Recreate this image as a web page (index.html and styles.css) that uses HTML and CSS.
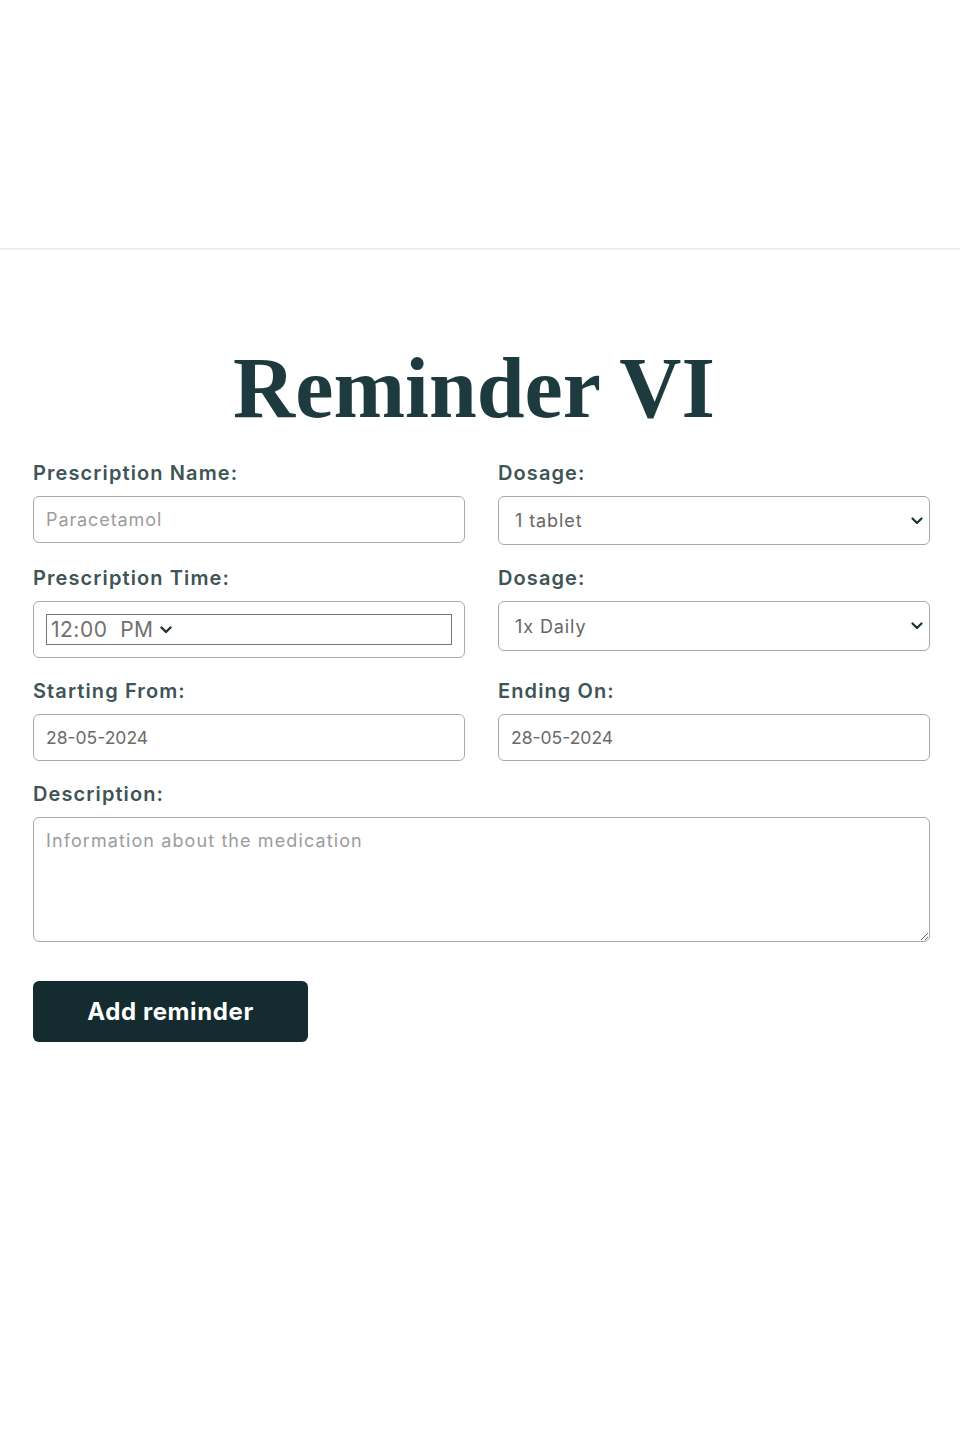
FILE: index.html
```html
<!DOCTYPE html>
<html lang="en">
<head>
<meta charset="utf-8">
<title>Reminder VI</title>
<link rel="stylesheet" href="styles.css">
</head>
<body>
<header class="topbar"></header>
<main class="page">
  <h1 class="title">Reminder VI</h1>
  <form class="form">
    <div class="field">
      <label class="label" for="name">Prescription Name:</label>
      <input class="control" id="name" type="text" placeholder="Paracetamol">
    </div>
    <div class="field">
      <label class="label" for="dose">Dosage:</label>
      <select class="control select" id="dose"><option>1 tablet</option><option>2 tablets</option></select>
    </div>
    <div class="field">
      <label class="label">Prescription Time:</label>
      <div class="time-wrap">
        <div class="time-box">
          <span class="time-text">12:00&nbsp;&nbsp;PM</span>
          <svg class="chev" width="12" height="8" viewBox="0 0 12 8"><path d="M1.5 1.5 L6 6 L10.5 1.5" fill="none" stroke="#1f3336" stroke-width="2.4" stroke-linecap="round" stroke-linejoin="round"/></svg>
        </div>
      </div>
    </div>
    <div class="field">
      <label class="label" for="freq">Dosage:</label>
      <select class="control select tall" id="freq"><option>1x Daily</option><option>2x Daily</option></select>
    </div>
    <div class="field">
      <label class="label" for="start">Starting From:</label>
      <input class="control date" id="start" type="text" value="28-05-2024">
    </div>
    <div class="field">
      <label class="label" for="end">Ending On:</label>
      <input class="control date" id="end" type="text" value="28-05-2024">
    </div>
    <div class="field wide">
      <label class="label" for="desc">Description:</label>
      <textarea class="control area" id="desc" placeholder="Information about the medication"></textarea>
    </div>
    <div class="field wide">
      <button class="btn" type="button">Add reminder</button>
    </div>
  </form>
</main>
</body>
</html>
```
FILE: styles.css
```css
html, body {
  margin: 0;
  padding: 0;
  background: #fff;
}
body {
  font-family: "Inter", "Open Sans", sans-serif;
  color: #3c5254;
}
.topbar {
  height: 248px;
  border-bottom: 1px solid #ececec;
  box-shadow: 0 1px 1px #f4f4f4;
}
.page {
  padding: 89px 30px 0 33px;
}
.title {
  margin: 0 0 24px 0;
  text-align: center;
  font-family: "Liberation Serif", serif;
  font-weight: 700;
  font-size: 86px;
  line-height: 100px;
  color: #1d3a3e;
  padding-right: 15px;
}
.form {
  display: grid;
  grid-template-columns: 1fr 1fr;
  column-gap: 33px;
  row-gap: 22px;
}
.field {
  display: flex;
  flex-direction: column;
  align-items: stretch;
}
.field.wide {
  grid-column: 1 / 3;
}
.label {
  font-size: 20px;
  line-height: 22px;
  font-weight: 600;
  letter-spacing: 1.1px;
  color: #3e5456;
  margin-bottom: 12px;
}
.control {
  box-sizing: border-box;
  height: 47px;
  border: 1px solid #a9a9a9;
  border-radius: 6px;
  padding: 0 12px;
  font-family: "Inter", "Open Sans", sans-serif;
  font-size: 18px;
  letter-spacing: 0.9px;
  color: #6a6a6a;
  background: #fff;
  outline: none;
}
.control::placeholder {
  color: #9c9c9c;
}
.date {
  letter-spacing: 0;
  font-size: 17.5px;
}
.select {
  height: 49px;
  padding: 0 34px 0 16px;
  color: #666;
  appearance: none;
  -webkit-appearance: none;
  background-image: url("data:image/svg+xml;utf8,<svg xmlns='http://www.w3.org/2000/svg' width='12' height='8' viewBox='0 0 12 8'><path d='M1.5 1.5 L6 6 L10.5 1.5' fill='none' stroke='%231f3336' stroke-width='2.2' stroke-linecap='round' stroke-linejoin='round'/></svg>");
  background-repeat: no-repeat;
  background-position: right 6px center;
  background-size: 12px 8px;
}
.select.tall {
  height: 50px;
}
.time-wrap {
  box-sizing: border-box;
  height: 57px;
  border: 1px solid #a9a9a9;
  border-radius: 6px;
  padding: 12px;
}
.time-box {
  box-sizing: border-box;
  height: 31px;
  border: 1px solid #767676;
  display: flex;
  align-items: center;
  padding-left: 4px;
  gap: 6px;
}
.time-text {
  font-size: 21px;
  letter-spacing: 0.5px;
  color: #707070;
}
.chev {
  display: block;
  margin-top: 1px;
}
.area {
  height: 125px;
  padding: 12px;
  resize: vertical;
  line-height: 22px;
  letter-spacing: 1.1px;
}
.btn {
  margin-top: 17px;
  width: 275px;
  height: 61px;
  border: none;
  border-radius: 6px;
  background: #142b2f;
  color: #fff;
  font-family: "Inter", "Open Sans", sans-serif;
  font-size: 24px;
  font-weight: 700;
  letter-spacing: 0.6px;
  cursor: pointer;
}
```
